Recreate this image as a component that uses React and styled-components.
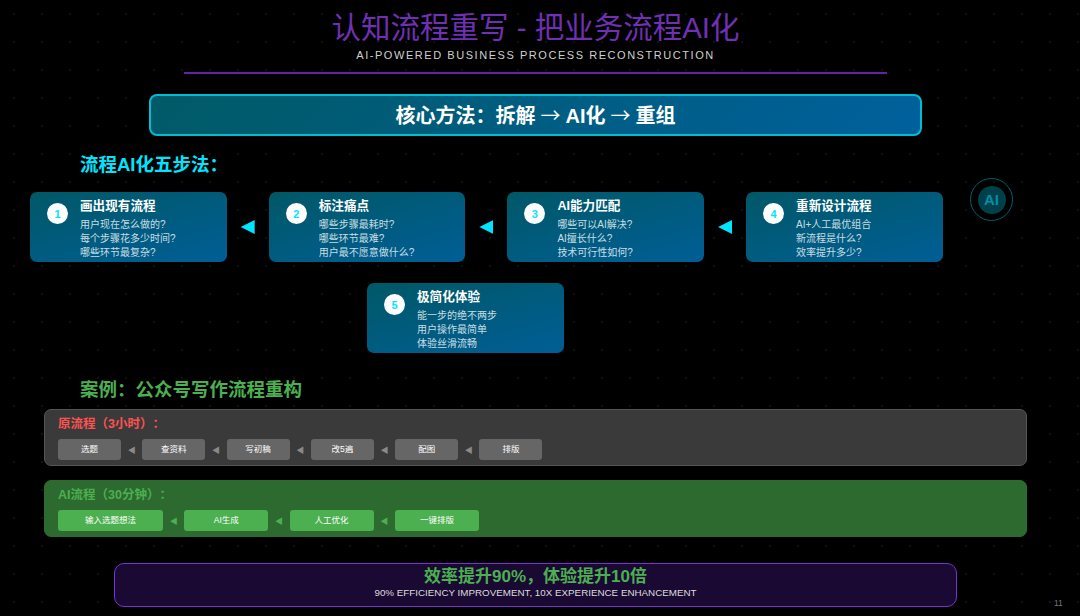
import styled, { createGlobalStyle } from "styled-components";

const FONT = `"Liberation Sans", "Noto Sans CJK SC", sans-serif`;

const steps = [
	{ n: 1, title: "画出现有流程", lines: ["用户现在怎么做的?", "每个步骤花多少时间?", "哪些环节最复杂?"] },
	{ n: 2, title: "标注痛点", lines: ["哪些步骤最耗时?", "哪些环节最难?", "用户最不愿意做什么?"] },
	{ n: 3, title: "AI能力匹配", lines: ["哪些可以AI解决?", "AI擅长什么?", "技术可行性如何?"] },
	{ n: 4, title: "重新设计流程", lines: ["AI+人工最优组合", "新流程是什么?", "效率提升多少?"] },
];

const lastStep = { n: 5, title: "极简化体验", lines: ["能一步的绝不两步", "用户操作最简单", "体验丝滑流畅"] };

const oldFlow = ["选题", "查资料", "写初稿", "改5遍", "配图", "排版"];
const aiFlow = [
	{ label: "输入选题想法", width: 105 },
	{ label: "AI生成", width: 84 },
	{ label: "人工优化", width: 84 },
	{ label: "一键排版", width: 84 },
];

function StepCard({ step }) {
	return (
		<Card>
			<Num>{step.n}</Num>
			<div>
				<CardTitle>{step.title}</CardTitle>
				{step.lines.map(line => (
					<CardLine key={line}>{line}</CardLine>
				))}
			</div>
		</Card>
	);
}

export default function App() {
	return (
		<Page>
			<GlobalStyle />
			<Header>
				<Title>认知流程重写 - 把业务流程AI化</Title>
				<Subtitle>AI-POWERED BUSINESS PROCESS RECONSTRUCTION</Subtitle>
				<Rule />
			</Header>

			<Method>核心方法：拆解 <MethodArrow>→</MethodArrow> AI化 <MethodArrow>→</MethodArrow> 重组</Method>

			<SectionTitle $color="#00e5ff" $top={16}>流程AI化五步法：</SectionTitle>

			<StepRow>
				{steps.map((step, i) => (
					<StepSlot key={step.n}>
						<StepCard step={step} />
						{i < steps.length - 1 && <Arrow />}
					</StepSlot>
				))}
			</StepRow>
			<LastRow>
				<StepCard step={lastStep} />
			</LastRow>

			<AiBadge>
				<AiCore>AI</AiCore>
			</AiBadge>

			<SectionTitle $color="#4caf50" $top={24}>案例：公众号写作流程重构</SectionTitle>

			<FlowPanel $bg="#3a3a3a" $border="#555555" $top={6}>
				<FlowTitle $color="#ff5252">原流程（3小时）：</FlowTitle>
				<Flow>
					{oldFlow.map((label, i) => (
						<FlowItem key={label}>
							<Tag $bg="#666666" $width={63}>{label}</Tag>
							{i < oldFlow.length - 1 && <SmallArrow $color="#8a8a8a">◀</SmallArrow>}
						</FlowItem>
					))}
				</Flow>
			</FlowPanel>

			<FlowPanel $bg="#2d6a2f" $border="#2d6a2f" $top={14}>
				<FlowTitle $color="#4caf50">AI流程（30分钟）：</FlowTitle>
				<Flow>
					{aiFlow.map((item, i) => (
						<FlowItem key={item.label}>
							<Tag $bg="#4caf50" $width={item.width}>{item.label}</Tag>
							{i < aiFlow.length - 1 && <SmallArrow $color="#4caf50">◀</SmallArrow>}
						</FlowItem>
					))}
				</Flow>
			</FlowPanel>

			<Result>
				<ResultTitle>效率提升90%，体验提升10倍</ResultTitle>
				<ResultSub>90% EFFICIENCY IMPROVEMENT, 10X EXPERIENCE ENHANCEMENT</ResultSub>
			</Result>

			<PageNumber>11</PageNumber>
		</Page>
	);
}

const GlobalStyle = createGlobalStyle`
	html, body {
		margin: 0;
		padding: 0;
		background: #000;
	}
`;

const Page = styled.div`
	position: relative;
	width: 1080px;
	height: 616px;
	overflow: hidden;
	box-sizing: border-box;
	padding-top: 8px;
	display: flex;
	flex-direction: column;
	font-family: ${FONT};
	text-spacing-trim: space-all;
	color: #fff;
	background-color: #000;
	background-image: radial-gradient(circle, rgba(255, 255, 255, 0.07) 0.7px, transparent 1px);
	background-size: 28px 28px;
`;

const Header = styled.header`
	width: 1071px;
	display: flex;
	flex-direction: column;
	align-items: center;
`;

const Title = styled.h1`
	margin: 1px 0 0;
	font-size: 29.5px;
	line-height: 37px;
	font-weight: 400;
	color: #7030b5;
`;

const Subtitle = styled.div`
	margin-top: 2px;
	font-size: 11px;
	line-height: 14px;
	letter-spacing: 1.55px;
	color: #cfcfcf;
`;

const Rule = styled.div`
	margin-top: 10px;
	width: 703px;
	height: 2px;
	background: #6a1fa8;
`;

const Method = styled.div`
	box-sizing: border-box;
	margin: 20px 0 0 149px;
	width: 773px;
	height: 42px;
	padding-bottom: 1px;
	display: flex;
	align-items: center;
	justify-content: center;
	gap: 5px;
	font-size: 20px;
	font-weight: 700;
	border: 2px solid #00bcd4;
	border-radius: 8px;
	background: linear-gradient(135deg, #005a66, #00609c);
`;

const MethodArrow = styled.span`
	font-family: "Noto Sans CJK SC", sans-serif;
	font-weight: 400;
`;

const SectionTitle = styled.h2`
	margin: ${p => p.$top}px 0 0 80px;
	font-size: 18.5px;
	line-height: 26px;
	font-weight: 700;
	color: ${p => p.$color};
`;

const StepRow = styled.div`
	display: flex;
	margin: 14px 0 0 30px;
`;

const StepSlot = styled.div`
	display: flex;
	align-items: center;
`;

const LastRow = styled.div`
	display: flex;
	margin: 21px 0 0 367px;
`;

const Card = styled.div`
	box-sizing: border-box;
	width: 196.7px;
	height: 70px;
	padding: 6px 10px 0 17px;
	display: flex;
	gap: 12px;
	border-radius: 7px;
	background: linear-gradient(165deg, #005866, #005e96);
`;

const Num = styled.div`
	flex: none;
	width: 21px;
	height: 21px;
	margin-top: 5px;
	border-radius: 50%;
	display: flex;
	align-items: center;
	justify-content: center;
	background: #fff;
	color: #00e5ff;
	font-size: 11px;
	font-weight: 700;
`;

const CardTitle = styled.div`
	font-size: 12.6px;
	line-height: 16px;
	font-weight: 700;
	margin-bottom: 4px;
`;

const CardLine = styled.div`
	font-size: 10px;
	line-height: 14px;
	color: rgba(255, 255, 255, 0.8);
`;

const Arrow = styled.div`
	width: 14px;
	height: 14px;
	margin: 0 14px;
	background: #00e5ff;
	clip-path: polygon(0 50%, 100% 0, 100% 100%);
`;

const AiBadge = styled.div`
	position: absolute;
	left: 970px;
	top: 178px;
	box-sizing: border-box;
	width: 43px;
	height: 43px;
	border-radius: 50%;
	border: 1.5px solid #00606e;
	display: flex;
	align-items: center;
	justify-content: center;
`;

const AiCore = styled.div`
	width: 28px;
	height: 28px;
	border-radius: 50%;
	background: #00404a;
	color: #0090a8;
	font-size: 15px;
	font-weight: 700;
	display: flex;
	align-items: center;
	justify-content: center;
`;

const FlowPanel = styled.section`
	box-sizing: border-box;
	margin: ${p => p.$top}px 0 0 44px;
	width: 983px;
	height: 57px;
	padding: 6px 13px 0;
	border-radius: 7px;
	border: 1px solid ${p => p.$border};
	background: ${p => p.$bg};
`;

const FlowTitle = styled.div`
	font-size: 12.5px;
	line-height: 16px;
	font-weight: 700;
	color: ${p => p.$color};
`;

const Flow = styled.div`
	display: flex;
	margin-top: 7px;
`;

const FlowItem = styled.div`
	display: flex;
	align-items: center;
`;

const Tag = styled.div`
	box-sizing: border-box;
	width: ${p => p.$width}px;
	height: 21px;
	padding-bottom: 3px;
	border-radius: 3px;
	background: ${p => p.$bg};
	display: flex;
	align-items: center;
	justify-content: center;
	font-size: 8.5px;
	color: #fff;
`;

const SmallArrow = styled.span`
	width: 21.3px;
	text-align: center;
	font-size: 8px;
	color: ${p => p.$color};
`;

const Result = styled.div`
	box-sizing: border-box;
	margin: 26px 0 0 114px;
	width: 843px;
	height: 44px;
	padding-bottom: 4px;
	border: 1.5px solid #7b2fd0;
	border-radius: 10px;
	background: #1a0a33;
	display: flex;
	flex-direction: column;
	align-items: center;
	justify-content: center;
`;

const ResultTitle = styled.div`
	font-size: 17px;
	line-height: 19px;
	font-weight: 700;
	color: #4caf50;
`;

const ResultSub = styled.div`
	font-size: 9.8px;
	line-height: 13px;
	color: #dcdcdc;
`;

const PageNumber = styled.div`
	position: absolute;
	left: 1054px;
	top: 598px;
	font-size: 8.5px;
	color: #777;
`;
